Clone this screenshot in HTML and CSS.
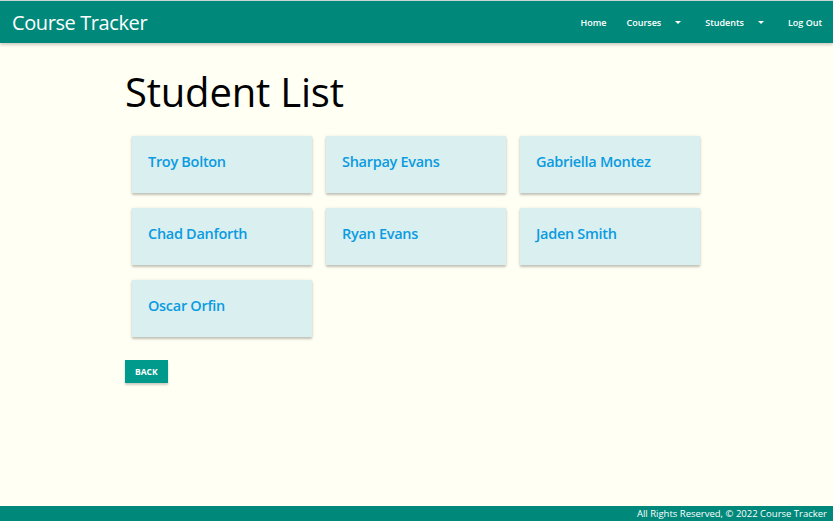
FILE: index.html
```html
<!DOCTYPE html>
<html>
<head>
<meta charset="utf-8">
<link rel="stylesheet" href="styles.css">
</head>
<body>
<nav class="nav">
  <a class="brand" href="#">Course Tracker</a>
  <ul class="links">
    <li><a href="#">Home</a></li>
    <li><a href="#">Courses <span class="caret"></span></a></li>
    <li><a href="#">Students <span class="caret"></span></a></li>
    <li><a href="#">Log Out</a></li>
  </ul>
</nav>
<main class="container">
  <h1 class="title">Student List</h1>
  <div class="grid">
    <a class="card" href="#">Troy Bolton</a>
    <a class="card" href="#">Sharpay Evans</a>
    <a class="card" href="#">Gabriella Montez</a>
    <a class="card" href="#">Chad Danforth</a>
    <a class="card" href="#">Ryan Evans</a>
    <a class="card" href="#">Jaden Smith</a>
    <a class="card" href="#">Oscar Orfin</a>
  </div>
  <a class="btn" href="#">BACK</a>
</main>
<footer class="footer">All Rights Reserved, © 2022 Course Tracker</footer>
</body>
</html>
```
FILE: styles.css
```css
* { box-sizing: border-box; }
html, body { margin: 0; padding: 0; height: 100%; }
body {
  background: #fffff3;
  font-family: "Open Sans", sans-serif;
  display: flex;
  flex-direction: column;
  min-height: 521px;
}
a { text-decoration: none; }
.nav {
  height: 43px;
  background: #00897b;
  border-top: 1px solid #c8d6d3;
  box-shadow: 0 2px 3px rgba(0,0,0,0.2);
  display: flex;
  align-items: center;
  justify-content: space-between;
  padding: 0 11px 0 12px;
}
.brand {
  color: #fff;
  font-size: 20px;
  letter-spacing: -0.4px;
}
.links {
  list-style: none;
  margin: 0;
  padding: 0;
  display: flex;
}
.links li a {
  color: #fff;
  font-size: 9px;
  font-weight: 600;
  padding: 0 10px;
  display: flex;
  align-items: center;
}
.links li:last-child a { padding-right: 0; }
.caret {
  display: inline-block;
  width: 0; height: 0;
  border-left: 3px solid transparent;
  border-right: 3px solid transparent;
  border-top: 3px solid #fff;
  margin-left: 14px;
  margin-right: 4px;
}
.container {
  width: 583px;
  margin: 0 125px;
  flex: 1;
}
.title {
  font-size: 40px;
  font-weight: normal;
  margin: 25px 0 20px;
  line-height: 48px;
  letter-spacing: -0.2px;
  color: #000;
}
.grid {
  display: grid;
  grid-template-columns: repeat(3, 180px);
  column-gap: 14px;
  row-gap: 15px;
  padding-left: 7px;
}
.card {
  height: 57px;
  background: #d9eff0;
  box-shadow: 0 2px 2px rgba(0,0,0,0.18), 0 1px 4px rgba(0,0,0,0.12);
  color: #0a9be0;
  font-size: 14.5px;
  font-weight: 550;
  padding: 16px 16px;
  letter-spacing: -0.3px;
}
.btn {
  display: inline-block;
  margin-top: 23px;
  height: 23px;
  line-height: 23px;
  padding: 0 10px;
  background: #009a8c;
  color: #fff;
  font-size: 8.5px;
  font-weight: bold;
  box-shadow: 0 2px 2px rgba(0,0,0,0.2);
}
.footer {
  height: 15px;
  background: #00897b;
  color: #fff;
  font-size: 9.5px;
  text-align: right;
  padding-right: 6px;
  line-height: 16px;
}
```
